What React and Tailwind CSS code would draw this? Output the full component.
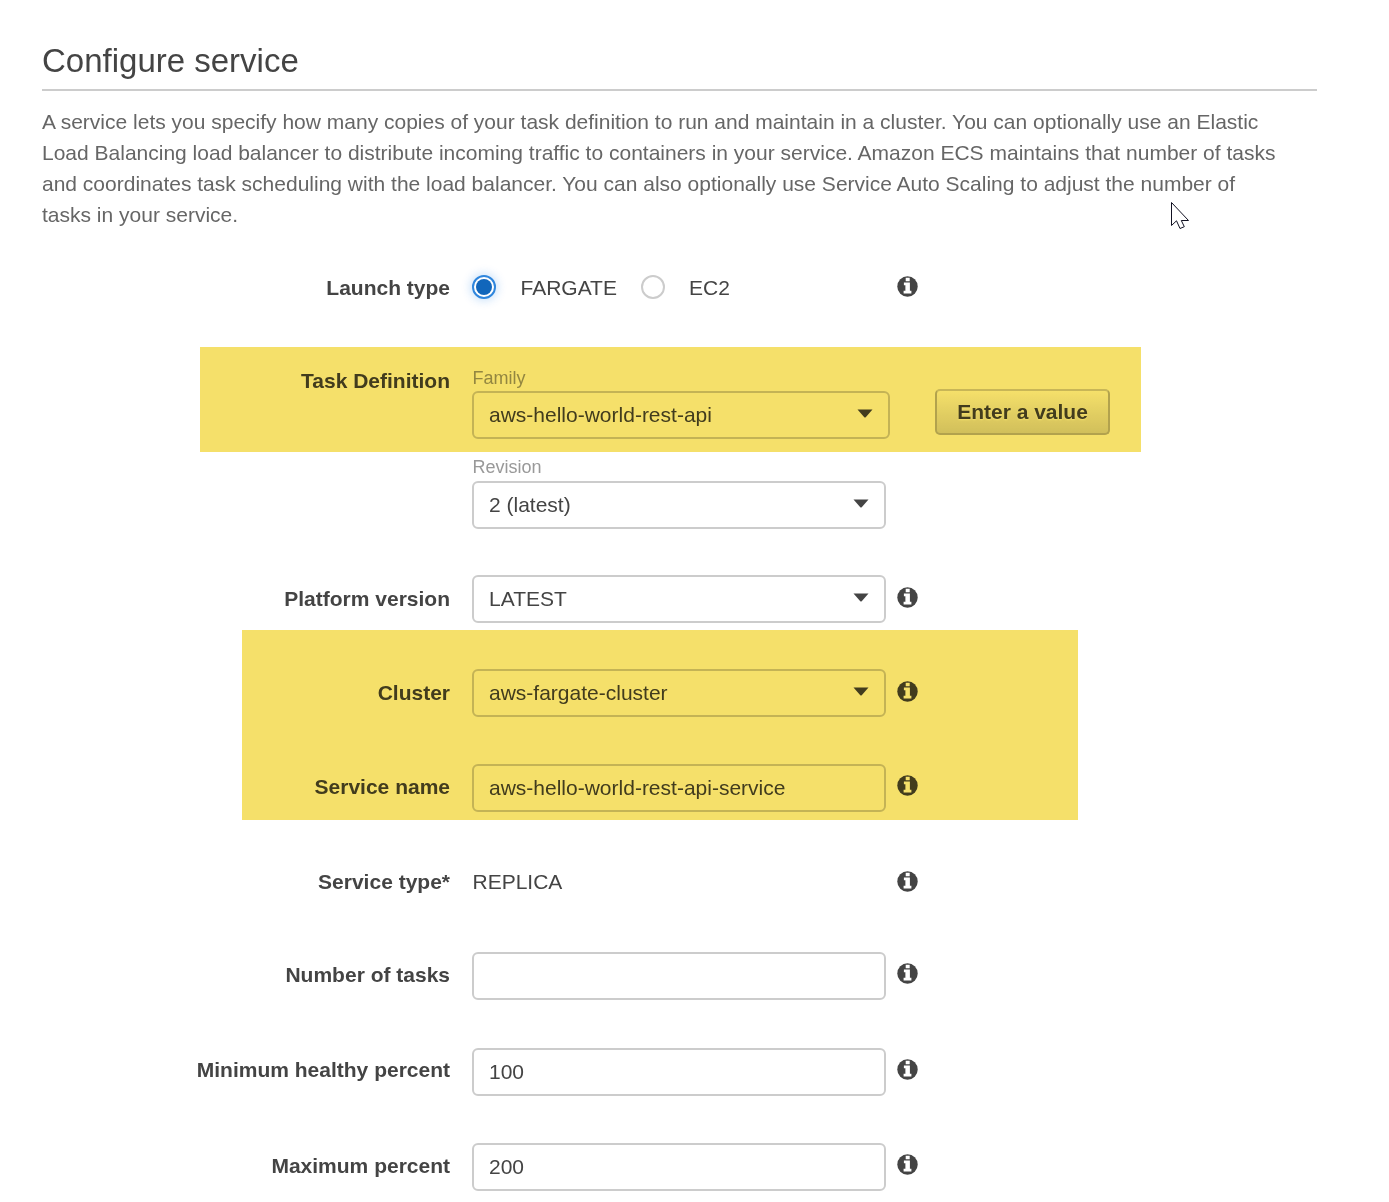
import React from "react";

function InfoIcon({ className = "" }) {
  return (
    <svg viewBox="0 0 21 21" className={`block size-[21px] shrink-0 ${className}`} aria-hidden="true">
      <circle cx="10.5" cy="10.5" r="10.2" fill="#444444" />
      <path d="M8.700 1.800H12.700V5.200H8.700ZM6.900 6.500H12.900V14.700H14.400V17.600H6.600V14.700H8.400V9.300H6.900Z" fill="white" />
    </svg>
  );
}

function Caret() {
  return (
    <svg viewBox="0 0 16 9" className="-mt-0.5 block h-[9px] w-4 shrink-0" fill="#444444" aria-hidden="true">
      <path d="M0.5 0.5H15.500L8.700 8.200Q8 8.800 7.300 8.200Z" />
    </svg>
  );
}

function Field({ children, select = false, width = "w-[414px]" }) {
  return (
    <div className={`flex h-12 shrink-0 items-center justify-between rounded-[6px] border-2 border-[#cccccc] pr-[15px] pb-0.5 pl-[15px] ${width}`}>
      <span className="leading-[31px]">{children}</span>
      {select && <Caret />}
    </div>
  );
}

function Row({ label, className = "", labelClass = "pt-2", infoClass = "mt-3", info = true, children }) {
  return (
    <div className={`flex items-start ${className}`}>
      <div className={`w-[408px] shrink-0 text-right leading-[31px] font-bold ${labelClass}`}>{label}</div>
      <div className="ml-[22px] flex w-[425px] shrink-0 items-start">{children}</div>
      {info && <InfoIcon className={infoClass} />}
    </div>
  );
}

export default function App() {
  return (
    <main className="relative h-[1202px] overflow-hidden bg-white pt-[41px] pr-[72px] pl-[42px] font-['Liberation_Sans',Arial,sans-serif] text-[21px] text-[#444444]">
      <h1 className="h-[50px] border-b-2 border-[#cccccc] text-[33px] leading-[40px]">Configure service</h1>
      <p className="mt-[15px] leading-[31px] whitespace-nowrap text-[#666666]">
        A service lets you specify how many copies of your task definition to run and maintain in a cluster. You can optionally use an Elastic<br />
        Load Balancing load balancer to distribute incoming traffic to containers in your service. Amazon ECS maintains that number of tasks<br />
        and coordinates task scheduling with the load balancer. You can also optionally use Service Auto Scaling to adjust the number of<br />
        tasks in your service.
      </p>

      <Row label="Launch type" className="mt-[33px] h-12" labelClass="pt-[9px]" infoClass="mt-[13px]">
        <div className="flex h-12 items-center">
          <span className="flex size-6 items-center justify-center rounded-full border-2 border-[#2f86dd] bg-white shadow-[0_0_10px_2px_rgba(0,115,230,0.2)]">
            <span className="size-4 rounded-full bg-[#1166bb]" />
          </span>
          <span className="ml-[24.5px] pt-px leading-[31px]">FARGATE</span>
          <span className="ml-6 size-6 rounded-full border-2 border-[#cccccc]" />
          <span className="ml-6 pt-px leading-[31px]">EC2</span>
        </div>
      </Row>

      <Row label="Task Definition" className="mt-[55px]" labelClass="-mt-px" info={false}>
        <div>
          <div className="flex items-start">
            <div>
              <div className="h-[25px] pl-[0.5px] text-[18px] leading-[24px] text-[#999999]">Family</div>
              <Field select width="w-[418px]">aws-hello-world-rest-api</Field>
            </div>
            <button className="mt-[23px] ml-[45px] h-[46px] w-[175px] shrink-0 rounded-[5px] border-2 border-[#b9b9b9] border-t-[#d0d0d0] bg-linear-to-b from-white to-[#dadada] pb-0.5 leading-[31px] font-bold [text-shadow:0_1px_2px_#ffffff]">
              Enter a value
            </button>
          </div>
          <div className="mt-4 h-[26px] pl-[0.5px] text-[18px] leading-[24px] text-[#999999]">Revision</div>
          <Field select>2 (latest)</Field>
        </div>
      </Row>

      <Row label="Platform version" className="mt-[46px]">
        <Field select>LATEST</Field>
      </Row>
      <Row label="Cluster" className="mt-[46px]">
        <Field select>aws-fargate-cluster</Field>
      </Row>
      <Row label="Service name" className="mt-[47px]" labelClass="pt-[7px]" infoClass="mt-[11px]">
        <Field>aws-hello-world-rest-api-service</Field>
      </Row>
      <Row label="Service type*" className="mt-[46px] h-12" infoClass="mt-[13px]">
        <span className="pt-2 pl-[0.5px] leading-[31px]">REPLICA</span>
      </Row>
      <Row label="Number of tasks" className="mt-[46px]" labelClass="pt-[7px]" infoClass="mt-[11px]">
        <Field />
      </Row>
      <Row label="Minimum healthy percent" className="mt-12" labelClass="pt-[6px]" infoClass="mt-[11px]">
        <Field>100</Field>
      </Row>
      <Row label="Maximum percent" className="mt-[47px]" labelClass="pt-[7px]" infoClass="mt-[11px]">
        <Field>200</Field>
      </Row>

      <div className="pointer-events-none absolute top-[347px] left-[200px] h-[105px] w-[941px] bg-[#f5e06a] mix-blend-multiply" />
      <div className="pointer-events-none absolute top-[630px] left-[242px] h-[190px] w-[836px] bg-[#f5e06a] mix-blend-multiply" />
      <svg viewBox="0 0 19 28" className="pointer-events-none absolute top-[202px] left-[1171px] h-7 w-[19px]" aria-hidden="true">
        <path d="M0.5 0.5V23.500L5.500 18.800L9 26.500L13.300 24.700L10.300 18.500H17.500Z" fill="white" stroke="#111122" strokeWidth="1" />
      </svg>
    </main>
  );
}
